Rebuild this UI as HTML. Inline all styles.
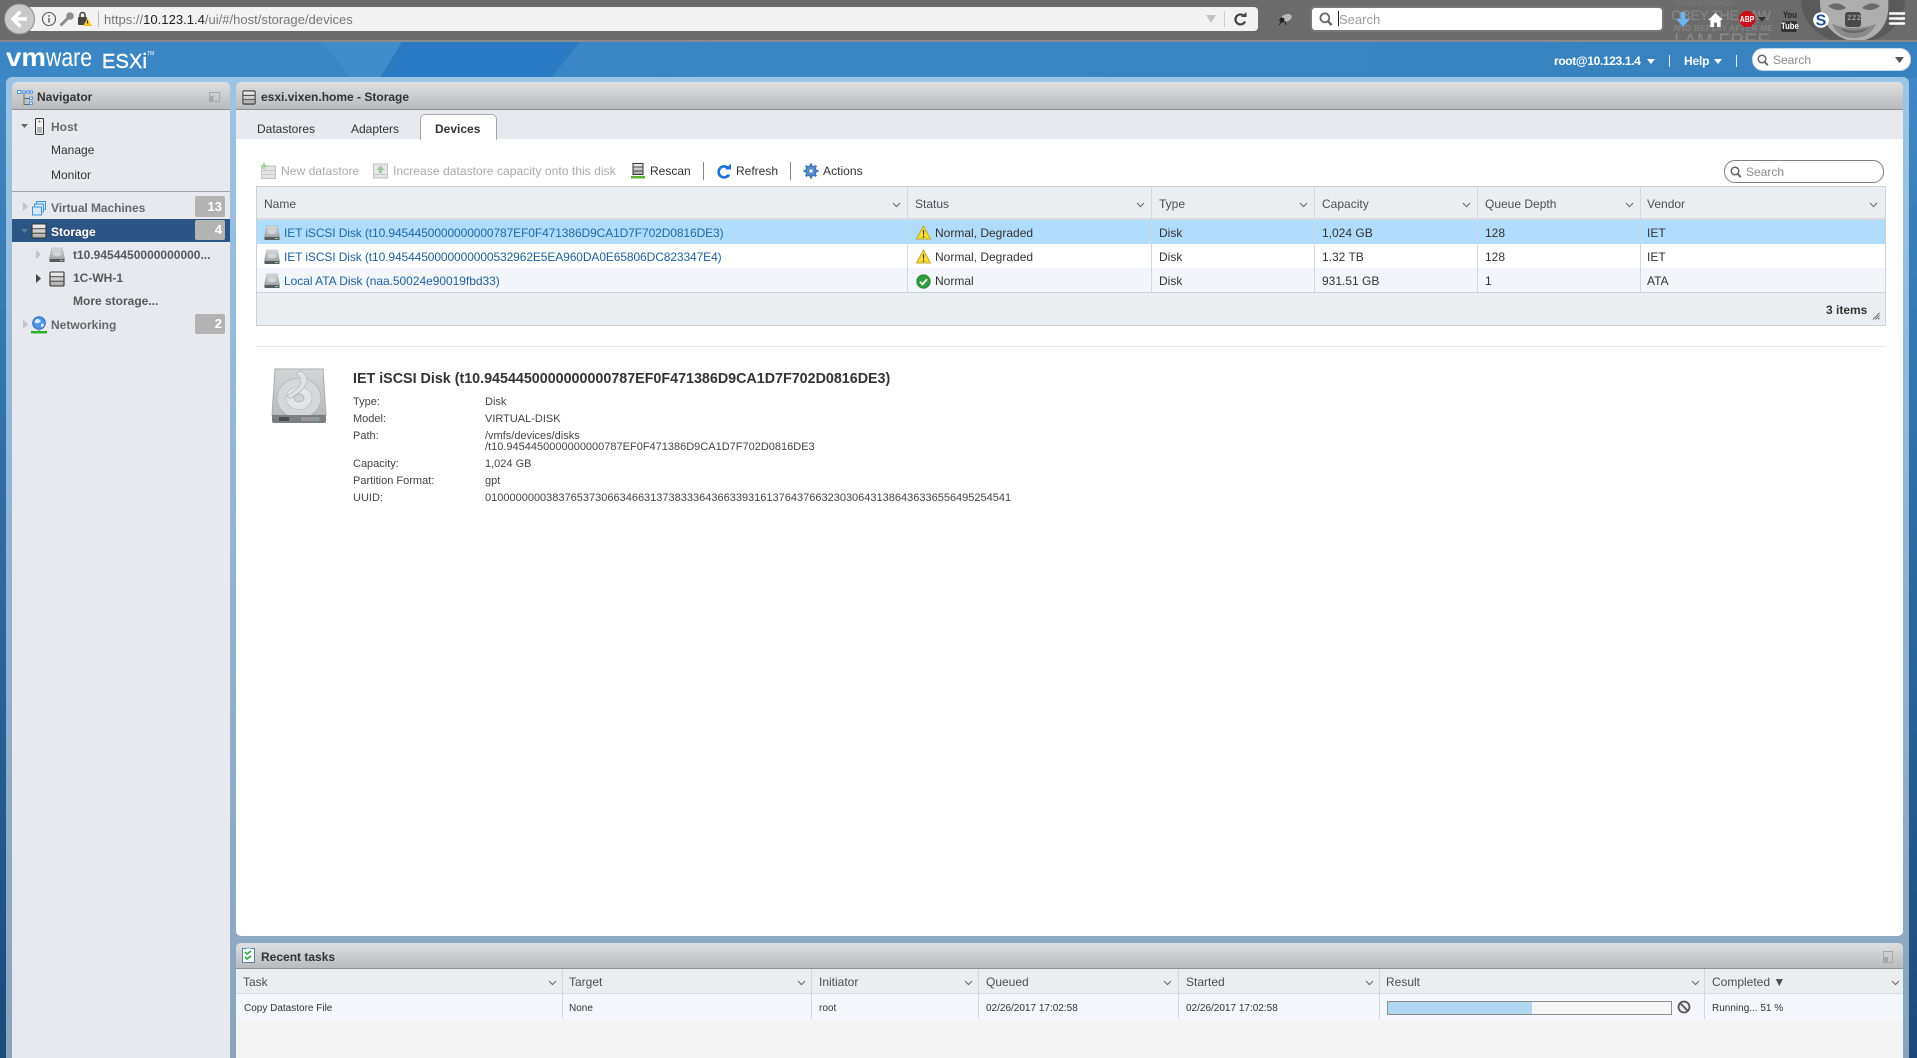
<!DOCTYPE html>
<html><head><meta charset="utf-8"><title>esxi.vixen.home - Storage</title>
<style>
html,body{margin:0;padding:0;width:1917px;height:1058px;overflow:hidden;background:#1c4a78}
#w{position:absolute;left:0;top:0;width:1917px;height:1058px;overflow:hidden;font-family:"Liberation Sans",sans-serif;font-size:12px;color:#333;filter:blur(.3px)}
.a{position:absolute}
.t{position:absolute;white-space:nowrap;line-height:16px;height:16px}
.b{font-weight:bold}
.g{color:#aaa;font-size:12.15px}
.h{color:#4b4f55}
.l{color:#1d5f9c}
.s{font-size:11px;color:#444}
.r{font-size:10px;color:#333}
.sep{position:absolute;width:1px;background:#d3d7db}
.ph{background:linear-gradient(#dfdfe0,#b8babd);border-bottom:1px solid #8d8f93;box-sizing:border-box}
.bd{position:absolute;left:195px;width:30px;background:#b3b3b3;border-radius:2px;color:#fff;font-weight:bold;font-size:13px;text-align:right;box-sizing:border-box;padding-right:3px}
svg{position:absolute;overflow:visible}
</style></head><body><div id="w">
<svg width="0" height="0" style="left:0;top:0"><defs>
<linearGradient id="gd" x1="0" y1="0" x2="0" y2="1"><stop offset="0" stop-color="#dfe2e4"/><stop offset="1" stop-color="#9ea3a6"/></linearGradient>
<linearGradient id="gs" x1="0" y1="0" x2="0" y2="1"><stop offset="0" stop-color="#f4f4f4"/><stop offset="1" stop-color="#a9a9a9"/></linearGradient>
<linearGradient id="gb" x1="0" y1="0" x2="0" y2="1"><stop offset="0" stop-color="#d4d5d7"/><stop offset="1" stop-color="#b9babc"/></linearGradient>
<symbol id="dk" viewBox="0 0 16 16"><path d="M3 1h10l2.500 10v1h-15v-1z" fill="url(#gd)" stroke="#9da2a6" stroke-width=".6"/><ellipse cx="8" cy="6.500" rx="4.800" ry="3" fill="#d4d7d9" stroke="#b3b6b9" stroke-width=".6"/><rect x=".5" y="12" width="15" height="3" fill="#565c60"/><rect x="11" y="13" width="3" height="1" fill="#9fd08f"/></symbol>
<symbol id="st" viewBox="0 0 16 16"><rect x="1" y="1" width="14" height="14" rx="1" fill="url(#gs)" stroke="#333" stroke-width="1.100"/><path d="M1 5.700h14M1 10.300h14" stroke="#444" stroke-width="1"/></symbol>
<symbol id="ch" viewBox="0 0 9 6"><path d="M1 1l3.500 3.600L8 1" fill="none" stroke="#666" stroke-width="1"/></symbol>
<symbol id="wn" viewBox="0 0 16 16"><path d="M8 1L15.500 15H.5z" fill="#f9dc2e" stroke="#b8a024" stroke-width=".9" stroke-linejoin="round"/><path d="M7.300 5.500h1.400l-.3 5.600h-.8zM7.200 12h1.600v1.600H7.200z" fill="#3a3a2a"/></symbol>
<symbol id="ok" viewBox="0 0 16 16"><circle cx="8" cy="8" r="7.200" fill="#2f9d3c" stroke="#237a2e" stroke-width=".8"/><path d="M4.300 8.300l2.600 2.700 4.800-5.400" fill="none" stroke="#fff" stroke-width="2"/></symbol>
<symbol id="sr" viewBox="0 0 12 12"><circle cx="5" cy="5" r="3.800" fill="none" stroke="#666" stroke-width="1.500"/><path d="M7.600 7.800l3.200 3.400" stroke="#666" stroke-width="2"/></symbol>
</defs></svg>

<!-- browser bar -->
<div class="a" style="left:0;top:0;width:1917px;height:41px;background:#6b6b6b"></div>
<div class="a" style="left:0;top:40px;width:1917px;height:2px;background:#8a8a8a"></div>
<svg style="left:1660px;top:0" width="257" height="41" viewBox="0 0 257 41">
<defs><clipPath id="cl"><rect width="257" height="40"/></clipPath></defs>
<g clip-path="url(#cl)" font-family="Liberation Sans,sans-serif" fill="#8a8a8a">
<text x="14" y="5" font-size="6" fill="#7c7c7c" textLength="60" lengthAdjust="spacingAndGlyphs">FOLLOW FASHION</text>
<text x="11" y="20" font-size="14" textLength="100" lengthAdjust="spacing">OBEY THE LAW</text>
<text x="13" y="31" font-size="8" textLength="100" lengthAdjust="spacing">AND REPLAY AFTER ME</text>
<text x="14" y="47" font-size="19" textLength="96" lengthAdjust="spacing">I AM FREE</text>
<ellipse cx="193" cy="0" rx="52" ry="44" fill="#5a5a5a"/>
<path d="M160-2h68c2 20-4 34-20 41-8 3-18 3-26-1-15-8-23-22-22-40z" fill="#aeaeae"/>
<path d="M168 6q10-6 18 2-9 5-18-2zM202 8q9-8 18-2-9 7-18 2z" fill="#6a6a6a"/>
<path d="M172 24q22 8 44 0-6 14-22 14t-22-14z" fill="#8a8a8a"/>
<path d="M180 28q14 5 28 0-4 5-14 5t-14-5z" fill="#666"/>
</g></svg>
<div class="a" style="left:30px;top:7px;width:1228px;height:24px;background:#f2f2f2;border-radius:0 4px 4px 0"></div>
<div class="a" style="left:1312px;top:8px;width:350px;height:22px;background:#fff;border-radius:3px;box-shadow:0 0 0 2px #777"></div>
<svg style="left:4px;top:4px" width="32" height="32" viewBox="0 0 32 32"><circle cx="15.500" cy="15" r="15" fill="#c9c9c9" stroke="#8e8e8e"/><path d="M16.500 7.500L9 15l7.500 7.500M9.500 15H23" fill="none" stroke="#fff" stroke-width="3.600"/></svg>
<svg style="left:42px;top:12px" width="14" height="14" viewBox="0 0 14 14"><circle cx="7" cy="7" r="6.500" fill="none" stroke="#555" stroke-width="1.100"/><path d="M7 6v4.500M7 3.200v1.600" stroke="#555" stroke-width="1.400"/></svg>
<svg style="left:59px;top:11px" width="16" height="16" viewBox="0 0 16 16"><circle cx="11" cy="5" r="3.800" fill="#8c8c8c"/><path d="M8.500 7.500L1.500 14.500" stroke="#8c8c8c" stroke-width="3"/></svg>
<svg style="left:77px;top:11px" width="16" height="16" viewBox="0 0 16 16"><rect x="1" y="6" width="9" height="8" rx="1" fill="#444"/><path d="M3 6V4a2.500 2.500 0 0 1 5 0v2" fill="none" stroke="#444" stroke-width="1.600"/><path d="M10.500 7l4.500 8H6z" fill="#f2c522"/><path d="M10.500 9.500v3" stroke="#333" stroke-width="1"/></svg>
<div class="a" style="left:98px;top:11px;width:1px;height:16px;background:#bbb"></div>
<div class="t" style="left:104px;top:12px;font-size:13.050px;color:#777">https://<span style="color:#222">10.123.1.4</span>/ui/#/host/storage/devices</div>
<svg style="left:1206px;top:15px" width="10" height="8" viewBox="0 0 10 8"><path d="M0 0h10L5 8z" fill="#c4c4c4"/></svg>
<div class="a" style="left:1224px;top:11px;width:1px;height:16px;background:#ccc"></div>
<svg style="left:1233px;top:12px" width="14" height="14" viewBox="0 0 14 14"><path d="M11.500 4.500A5 5 0 1 0 12 9.500" fill="none" stroke="#444" stroke-width="2.200"/><path d="M8 5h5.500V0z" fill="#444"/></svg>
<svg style="left:1276px;top:12px" width="18" height="14" viewBox="0 0 18 14"><ellipse cx="10" cy="6" rx="6" ry="3.600" fill="#b9b9b9" transform="rotate(-20 10 6)"/><circle cx="6" cy="8" r="2.600" fill="#222"/><path d="M6 9l-3 4M9 9l1 4" stroke="#222"/></svg>
<svg style="left:1319px;top:12px" width="14" height="14"><use href="#sr" width="14" height="14"/></svg>
<div class="a" style="left:1338px;top:11px;width:1px;height:15px;background:#222"></div>
<div class="t" style="left:1339px;top:12px;font-size:13px;color:#999">Search</div>
<svg style="left:1676px;top:12px" width="14" height="15" viewBox="0 0 15 17" preserveAspectRatio="none"><path d="M5 0h5v8h5l-7.500 9L0 8h5z" fill="#6eb3ee"/></svg>
<svg style="left:1708px;top:13px" width="15" height="14" viewBox="0 0 16 16" preserveAspectRatio="none"><path d="M8 0L0 8h2.500v8h4v-5h3v5h4V8H16z" fill="#fff"/></svg>
<svg style="left:1739px;top:11px" width="16" height="16" viewBox="0 0 16 16"><path d="M4.700 0h6.600L16 4.700v6.600L11.300 16H4.700L0 11.300V4.700z" fill="#c8101a"/><text x="8" y="11" font-size="8.500" font-weight="bold" fill="#fff" text-anchor="middle" font-family="Liberation Sans" textLength="14.500" lengthAdjust="spacingAndGlyphs">ABP</text></svg>
<svg style="left:1758px;top:17px" width="8" height="5" viewBox="0 0 8 5"><path d="M0 0h8L4 5z" fill="#333"/></svg>
<div class="a" style="left:1781px;top:21px;width:16px;height:11px;background:#333;border-radius:2px"></div>
<div class="t" style="left:1783px;top:10px;font-size:9px;font-weight:bold;color:#222;line-height:10px;height:10px;transform-origin:0 0;transform:scaleX(.85)">You</div>
<div class="t" style="left:1781px;top:21px;font-size:9px;font-weight:bold;color:#fff;line-height:11px;height:11px;transform-origin:0 0;transform:scaleX(.85)">Tube</div>
<svg style="left:1813px;top:12px" width="16" height="16" viewBox="0 0 16 16"><circle cx="8" cy="8" r="7.800" fill="#fff"/><text x="8" y="13.500" font-size="16" font-weight="bold" fill="#1b4f9c" text-anchor="middle" font-family="Liberation Sans">S</text></svg>
<div class="a" style="left:1845px;top:12px;width:16px;height:15px;background:#4a4a4a;border-radius:3px"></div>
<div class="t" style="left:1847px;top:11px;font-size:8px;color:#bbb;font-family:'Liberation Mono',monospace">zzz</div>
<svg style="left:1889px;top:12px" width="16" height="13" viewBox="0 0 16 13"><path d="M1 1.500h14M1 6.500h14M1 11.500h14" stroke="#fff" stroke-width="2.400" stroke-linecap="round"/></svg>

<!-- blue header -->
<div class="a" style="left:0;top:42px;width:1917px;height:36px;background:linear-gradient(90deg,#3b87c5 0,#3b87c5 30%,#3781bf 100%)"></div>
<svg style="left:0;top:42px" width="1917" height="36" viewBox="0 0 1917 36"><path d="M322 0h80l-22 36h-29z" fill="#408dc9"/><path d="M402 0h178l-29 36H380z" fill="#2a79c3"/></svg>
<svg style="left:0;top:42px" width="160" height="36" viewBox="0 0 160 36">
<text x="6" y="24" font-size="26" font-weight="bold" fill="#fff" font-family="Liberation Sans" textLength="40" lengthAdjust="spacingAndGlyphs">vm</text>
<text x="46" y="24" font-size="26" fill="#fff" font-family="Liberation Sans" textLength="46" lengthAdjust="spacingAndGlyphs">ware</text>
<text x="102" y="26" font-size="20" fill="#fff" stroke="#fff" stroke-width=".4" font-family="Liberation Sans" textLength="45" lengthAdjust="spacing">ESXi</text>
<text x="147" y="13" font-size="5" fill="#fff" font-family="Liberation Sans">TM</text>
</svg>
<div class="t b" style="left:1554px;top:53px;color:#fff;letter-spacing:-.35px">root@10.123.1.4</div>
<svg style="left:1647px;top:59px" width="8" height="5" viewBox="0 0 8 5"><path d="M0 0h8L4 5z" fill="#fff"/></svg>
<div class="a" style="left:1669px;top:55px;width:1px;height:12px;background:#dcecf7"></div>
<div class="t b" style="left:1684px;top:53px;color:#fff;letter-spacing:-.2px">Help</div>
<svg style="left:1714px;top:59px" width="8" height="5" viewBox="0 0 8 5"><path d="M0 0h8L4 5z" fill="#fff"/></svg>
<div class="a" style="left:1736px;top:55px;width:1px;height:12px;background:#dcecf7"></div>
<div class="a" style="left:1752px;top:48px;width:159px;height:23px;background:#fff;border-radius:11px;box-sizing:border-box;border:1px solid #c7d6e3"></div>
<svg style="left:1757px;top:54px" width="12" height="13"><use href="#sr" width="12" height="12"/></svg>
<div class="t" style="left:1773px;top:52px;color:#8b8b8b">Search</div>
<svg style="left:1895px;top:57px" width="9" height="6" viewBox="0 0 9 6"><path d="M0 0h9L4.500 6z" fill="#555"/></svg>

<!-- background strips -->
<div class="a" style="left:0;top:78px;width:1917px;height:980px;background:linear-gradient(#3d88c5,#1b4a7a)"></div>
<div class="a" style="left:6px;top:77px;width:1903px;height:981px;background:linear-gradient(#9cc4e5 0,#93b9da 30%,#8aa4bd 100%);border-radius:6px 6px 0 0"></div>

<!-- navigator -->
<div class="a" style="left:12px;top:82px;width:218px;height:976px;background:#e8e9ee;border-radius:5px 5px 0 0;overflow:hidden">
<div class="ph" style="height:28px"></div>
</div>
<svg style="left:17px;top:90px" width="17" height="16" viewBox="0 0 17 16"><g fill="#fff" stroke="#3b8de0" stroke-width=".9"><rect x=".5" y=".5" width="3.400" height="3"/><rect x="5.700" y="1" width="2.400" height="2.200"/><rect x="9.500" y="1" width="2.400" height="2.200"/><rect x="13" y="1" width="2.400" height="2.200"/><rect x="12.500" y="7" width="2.800" height="2.600"/><rect x="12.500" y="12" width="2.800" height="2.600"/></g><path d="M7 4v10.500h5.500M7 8.500h5.500" fill="none" stroke="#666" stroke-width=".9"/></svg>
<div class="t b" style="left:37px;top:89px">Navigator</div>
<svg style="left:209px;top:92px" width="11" height="10" viewBox="0 0 11 10"><rect x=".5" y=".5" width="10" height="9" fill="none" stroke="#a9a9ab"/><rect x=".5" y="4" width="4" height="5.500" fill="#a9a9ab"/></svg>

<svg style="left:21px;top:124px" width="7" height="4" viewBox="0 0 9 5" preserveAspectRatio="none"><path d="M0 0h9L4.500 5z" fill="#666"/></svg>
<svg style="left:35px;top:118px" width="9" height="17" viewBox="0 0 9 17"><rect x=".5" y=".5" width="8" height="16" rx="1" fill="#f1f1f1" stroke="#333"/><path d="M2 10h5M2 12h5M2 14h5" stroke="#555" stroke-width=".8"/><circle cx="4.500" cy="3.500" r=".9" fill="#555"/></svg>
<div class="t b" style="left:51px;top:119px;color:#6a6a6a">Host</div>
<div class="t" style="left:51px;top:142px">Manage</div>
<div class="t" style="left:51px;top:167px">Monitor</div>
<div class="a" style="left:12px;top:191px;width:218px;height:1px;background:#a2a4a8"></div>

<svg style="left:23px;top:202px" width="5" height="9" viewBox="0 0 5 9"><path d="M0 0l5 4.500L0 9z" fill="#c3c4c7"/></svg>
<svg style="left:32px;top:201px" width="15" height="15" viewBox="0 0 15 15"><g fill="#d6e9fa" stroke="#3f95df" stroke-width="1"><rect x="4.500" y=".5" width="9" height="8"/><rect x="2.500" y="3" width="9" height="8"/><rect x=".5" y="6" width="9" height="8"/></g></svg>
<div class="t b" style="left:51px;top:200px;color:#66686c;letter-spacing:-.06px">Virtual Machines</div>
<div class="bd" style="top:196px;height:21px;line-height:21px">13</div>
<div class="a" style="left:12px;top:219px;width:218px;height:23px;background:#2a5585"></div>
<svg style="left:21px;top:229px" width="7" height="4" viewBox="0 0 9 5" preserveAspectRatio="none"><path d="M0 0h9L4.500 5z" fill="#5d7a9b"/></svg>
<svg style="left:31px;top:223px" width="16" height="16"><use href="#st" width="16" height="16"/></svg>
<div class="t b" style="left:51px;top:224px;color:#fff;text-shadow:0 0 1px #555">Storage</div>
<div class="bd" style="top:220px;height:20px;line-height:20px">4</div>
<svg style="left:36px;top:250px" width="5" height="9" viewBox="0 0 5 9"><path d="M0 0l5 4.500L0 9z" fill="#c3c4c7"/></svg>
<svg style="left:49px;top:247px" width="16" height="16"><use href="#dk" width="16" height="16"/></svg>
<div class="t b" style="left:73px;top:247px;color:#56585c">t10.9454450000000000...</div>
<svg style="left:36px;top:274px" width="5" height="9" viewBox="0 0 5 9"><path d="M0 0l5 4.500L0 9z" fill="#444"/></svg>
<svg style="left:49px;top:271px" width="16" height="16"><use href="#st" width="16" height="16"/></svg>
<div class="t b" style="left:73px;top:270px;color:#56585c">1C-WH-1</div>
<div class="t b" style="left:73px;top:293px;color:#56585c">More storage...</div>
<svg style="left:23px;top:320px" width="5" height="9" viewBox="0 0 5 9"><path d="M0 0l5 4.500L0 9z" fill="#c3c4c7"/></svg>
<svg style="left:31px;top:316px" width="16" height="17" viewBox="0 0 16 17"><circle cx="8" cy="7" r="6.300" fill="#4f97e6" stroke="#2b69b8"/><path d="M4 4q3-2 5 0t-2 3-3-3zM10 8q3-1 3 1t-3 2z" fill="#d8ecff"/><path d="M8 13v2" stroke="#777"/><rect x="0" y="15" width="16" height="2.400" fill="#22b522"/></svg>
<div class="t b" style="left:51px;top:317px;color:#66686c">Networking</div>
<div class="bd" style="top:314px;height:20px;line-height:20px">2</div>

<!-- main panel -->
<div class="a" style="left:236px;top:82px;width:1667px;height:854px;background:#fff;border-radius:5px;overflow:hidden">
<div class="ph" style="height:28px"></div>
<div style="height:29px;background:#e8e9ee"></div>
</div>
<svg style="left:242px;top:90px" width="14" height="15" viewBox="0 0 16 16" preserveAspectRatio="none"><use href="#st" width="16" height="16"/></svg>
<div class="t b" style="left:261px;top:89px;color:#333">esxi.vixen.home - Storage</div>
<div class="t" style="left:257px;top:121px">Datastores</div>
<div class="t" style="left:351px;top:121px">Adapters</div>
<div class="a" style="left:420px;top:114px;width:77px;height:26px;background:#fff;border:1px solid #a4a6aa;border-bottom:0;border-radius:5px 5px 0 0;box-sizing:border-box"></div>
<div class="t b" style="left:435px;top:121px">Devices</div>

<!-- toolbar -->
<svg style="left:261px;top:163px" width="15" height="16" viewBox="0 0 15 16"><rect x=".5" y="3" width="14" height="12.500" fill="#e4e4e4" stroke="#c2c2c2"/><path d="M1 7.500h13M1 11.500h13" stroke="#c9c9c9"/><path d="M3 0v6M0 3h6" stroke="#9ed79a" stroke-width="2"/></svg>
<div class="t g" style="left:281px;top:163px">New datastore</div>
<svg style="left:373px;top:163px" width="15" height="16" viewBox="0 0 15 16"><rect x=".5" y="1" width="14" height="14" fill="#e6e6e6" stroke="#c2c2c2"/><path d="M7.500 2.500l4 4.500h-2.500v3h-3V7H3.500z" fill="#9dc99a"/><path d="M1 11.500h13" stroke="#c4c4c4"/></svg>
<div class="t g" style="left:393px;top:163px">Increase datastore capacity onto this disk</div>
<svg style="left:631px;top:163px" width="14" height="16" viewBox="0 0 14 16"><rect x="2" y=".5" width="10" height="11" fill="url(#gs)" stroke="#333"/><path d="M2 4h10M2 8h10" stroke="#444"/><rect x="0" y="13" width="14" height="2.500" fill="#59b52f"/></svg>
<div class="t" style="left:650px;top:163px">Rescan</div>
<div class="a" style="left:703px;top:162px;width:1px;height:18px;background:#888"></div>
<svg style="left:717px;top:163px" width="15" height="16" viewBox="0 0 15 16"><path d="M11.500 5.500A5.500 5.500 0 1 0 12 11.500" fill="none" stroke="#1a74d2" stroke-width="2.600"/><path d="M8 6.500h6V.5z" fill="#1a74d2"/></svg>
<div class="t" style="left:736px;top:163px">Refresh</div>
<div class="a" style="left:790px;top:162px;width:1px;height:18px;background:#888"></div>
<svg style="left:803px;top:163px" width="16" height="16" viewBox="0 0 16 16"><circle cx="8" cy="8" r="5.200" fill="#5a90cf" stroke="#2f62a5"/><circle cx="8" cy="8" r="2.200" fill="#e6f0fa" stroke="#2f62a5" stroke-width=".6"/><path d="M8 .5v2.500M8 13v2.500M.5 8H3M13 8h2.500M2.700 2.700l1.800 1.800M11.500 11.500l1.800 1.800M2.700 13.300l1.800-1.800M11.500 4.500l1.800-1.800" stroke="#3e76bd" stroke-width="2.200"/></svg>
<div class="t" style="left:823px;top:163px;font-size:12.100px">Actions</div>
<div class="a" style="left:1724px;top:160px;width:160px;height:23px;box-sizing:border-box;border:1px solid #7d7f82;border-radius:11px;background:#fff"></div>
<svg style="left:1730px;top:166px" width="12" height="13"><use href="#sr" width="12" height="12"/></svg>
<div class="t" style="left:1746px;top:164px;color:#8b8b8b">Search</div>

<!-- table -->
<div class="a" style="left:256px;top:186px;width:1630px;height:140px;box-sizing:border-box;border:1px solid #ccd0d4;background:#ebeef1"></div>
<div class="a" style="left:257px;top:218px;width:1628px;height:2px;background:#d6dade"></div>
<div class="a" style="left:257px;top:220px;width:1628px;height:24px;background:#b0dcfd"></div>
<div class="a" style="left:257px;top:244px;width:1628px;height:24px;background:#fff"></div>
<div class="a" style="left:257px;top:268px;width:1628px;height:24px;background:#f2f6fb"></div>
<div class="a" style="left:257px;top:292px;width:1628px;height:1px;background:#cfd3d7"></div>
<div class="sep" style="left:907px;top:187px;height:105px"></div>
<div class="sep" style="left:1151px;top:187px;height:105px"></div>
<div class="sep" style="left:1314px;top:187px;height:105px"></div>
<div class="sep" style="left:1477px;top:187px;height:105px"></div>
<div class="sep" style="left:1640px;top:187px;height:105px"></div>
<div class="t h" style="left:264px;top:196px">Name</div>
<div class="t h" style="left:915px;top:196px">Status</div>
<div class="t h" style="left:1159px;top:196px">Type</div>
<div class="t h" style="left:1322px;top:196px">Capacity</div>
<div class="t h" style="left:1485px;top:196px">Queue Depth</div>
<div class="t h" style="left:1647px;top:196px">Vendor</div>
<svg style="left:892px;top:202px" width="9" height="6"><use href="#ch" width="9" height="6"/></svg>
<svg style="left:1136px;top:202px" width="9" height="6"><use href="#ch" width="9" height="6"/></svg>
<svg style="left:1299px;top:202px" width="9" height="6"><use href="#ch" width="9" height="6"/></svg>
<svg style="left:1462px;top:202px" width="9" height="6"><use href="#ch" width="9" height="6"/></svg>
<svg style="left:1625px;top:202px" width="9" height="6"><use href="#ch" width="9" height="6"/></svg>
<svg style="left:1869px;top:202px" width="9" height="6"><use href="#ch" width="9" height="6"/></svg>

<svg style="left:264px;top:225px" width="16" height="16"><use href="#dk" width="16" height="16"/></svg>
<div class="t l" style="left:284px;top:225px;color:#1e6aa8;letter-spacing:-.105px">IET iSCSI Disk (t10.9454450000000000787EF0F471386D9CA1D7F702D0816DE3)</div>
<svg style="left:916px;top:225px" width="15" height="15"><use href="#wn" width="15" height="15"/></svg>
<div class="t" style="left:935px;top:225px">Normal, Degraded</div>
<div class="t" style="left:1159px;top:225px">Disk</div>
<div class="t" style="left:1322px;top:225px">1,024 GB</div>
<div class="t" style="left:1485px;top:225px">128</div>
<div class="t" style="left:1647px;top:225px">IET</div>

<svg style="left:264px;top:249px" width="16" height="16"><use href="#dk" width="16" height="16"/></svg>
<div class="t l" style="left:284px;top:249px;letter-spacing:-.105px">IET iSCSI Disk (t10.9454450000000000532962E5EA960DA0E65806DC823347E4)</div>
<svg style="left:916px;top:249px" width="15" height="15"><use href="#wn" width="15" height="15"/></svg>
<div class="t" style="left:935px;top:249px">Normal, Degraded</div>
<div class="t" style="left:1159px;top:249px">Disk</div>
<div class="t" style="left:1322px;top:249px">1.32 TB</div>
<div class="t" style="left:1485px;top:249px">128</div>
<div class="t" style="left:1647px;top:249px">IET</div>

<svg style="left:264px;top:273px" width="16" height="16"><use href="#dk" width="16" height="16"/></svg>
<div class="t l" style="left:284px;top:273px;letter-spacing:-.035px">Local ATA Disk (naa.50024e90019fbd33)</div>
<svg style="left:916px;top:274px" width="15" height="15"><use href="#ok" width="15" height="15"/></svg>
<div class="t" style="left:935px;top:273px">Normal</div>
<div class="t" style="left:1159px;top:273px">Disk</div>
<div class="t" style="left:1322px;top:273px">931.51 GB</div>
<div class="t" style="left:1485px;top:273px">1</div>
<div class="t" style="left:1647px;top:273px">ATA</div>

<div class="t b" style="left:1826px;top:302px">3 items</div>
<svg style="left:1872px;top:312px" width="8" height="8" viewBox="0 0 8 8"><path d="M7.500 1L1 7.500M7.500 3.500L3.500 7.500M7.500 6L6 7.500" stroke="#666" stroke-width=".9"/></svg>

<div class="a" style="left:256px;top:346px;width:1630px;height:1px;background:#e6e6e6"></div>

<!-- details -->
<svg style="left:271px;top:368px" width="56" height="57" viewBox="0 0 56 57">
<path d="M4 1h48l3 46H1z" fill="url(#gb)" stroke="#a9abad"/>
<ellipse cx="28" cy="30" rx="22" ry="20" fill="#d6d7d9" stroke="#b2b4b6" stroke-width=".8"/>
<ellipse cx="28" cy="30" rx="13" ry="11.500" fill="#e4e5e6" stroke="#bcbec0" stroke-width=".8"/>
<ellipse cx="28" cy="30" rx="5" ry="4" fill="#d2d3d5" stroke="#a9abad" stroke-width=".7"/>
<path d="M30 3q12 8 0 20l-11 8-3-3 11-8q6-8-2-15z" fill="#e0e1e2" stroke="#aeb0b2" stroke-width=".6"/>
<path d="M1 47h54v6q0 2-2 2H3q-2 0-2-2z" fill="#7c7f82"/>
<rect x="8" y="49" width="10" height="4" fill="#4a4c4e"/>
<rect x="30" y="49" width="18" height="4" fill="#96999b"/>
<rect x="47" y="50" width="2" height="1" fill="#7fd06a"/>
</svg>
<div class="t b" style="left:353px;top:371px;font-size:14.300px;color:#333">IET iSCSI Disk (t10.9454450000000000787EF0F471386D9CA1D7F702D0816DE3)</div>
<div class="t s" style="left:353px;top:394px">Type:</div><div class="t s" style="left:485px;top:394px">Disk</div>
<div class="t s" style="left:353px;top:411px">Model:</div><div class="t s" style="left:485px;top:411px">VIRTUAL-DISK</div>
<div class="t s" style="left:353px;top:428px">Path:</div><div class="t s" style="left:485px;top:428px">/vmfs/devices/disks</div>
<div class="t s" style="left:485px;top:439px">/t10.9454450000000000787EF0F471386D9CA1D7F702D0816DE3</div>
<div class="t s" style="left:353px;top:456px">Capacity:</div><div class="t s" style="left:485px;top:456px">1,024 GB</div>
<div class="t s" style="left:353px;top:473px">Partition Format:</div><div class="t s" style="left:485px;top:473px">gpt</div>
<div class="t s" style="left:353px;top:490px">UUID:</div><div class="t s" style="left:485px;top:490px">01000000003837653730663466313738333643663393161376437663230306431386436336556495254541</div>

<!-- tasks -->
<div class="a" style="left:236px;top:943px;width:1667px;height:115px;background:#f3f3f3;border-radius:5px 5px 0 0;overflow:hidden">
<div class="ph" style="height:26px"></div>
<div style="height:25px;background:#ebeef1;border-bottom:1px solid #d8dbdf;box-sizing:border-box"></div>
<div style="height:25px;background:#f3f7fc"></div>
</div>
<svg style="left:242px;top:946px" width="13" height="17" viewBox="0 0 13 17"><rect x=".5" y="2.500" width="12" height="14" fill="#f2f7fb" stroke="#5c7f9a"/><path d="M4 3l2.500-3L9 3z" fill="#a8d4f2"/><path d="M3 6l2 2 4-3M3 11l2 2 4-3" fill="none" stroke="#2aa52a" stroke-width="1.500"/></svg>
<div class="t b" style="left:261px;top:949px;color:#333">Recent tasks</div>
<svg style="left:1883px;top:951px" width="10" height="12" viewBox="0 0 10 12"><rect x=".5" y=".5" width="9" height="11" fill="none" stroke="#a5a7aa"/><rect x=".5" y="6" width="4.500" height="5.500" fill="#a5a7aa"/></svg>
<div class="t h" style="left:243px;top:974px">Task</div>
<div class="t h" style="left:569px;top:974px">Target</div>
<div class="t h" style="left:819px;top:974px">Initiator</div>
<div class="t h" style="left:986px;top:974px">Queued</div>
<div class="t h" style="left:1186px;top:974px">Started</div>
<div class="t h" style="left:1386px;top:974px">Result</div>
<div class="t h" style="left:1712px;top:974px">Completed ▼</div>
<svg style="left:548px;top:980px" width="9" height="6"><use href="#ch" width="9" height="6"/></svg>
<svg style="left:797px;top:980px" width="9" height="6"><use href="#ch" width="9" height="6"/></svg>
<svg style="left:964px;top:980px" width="9" height="6"><use href="#ch" width="9" height="6"/></svg>
<svg style="left:1163px;top:980px" width="9" height="6"><use href="#ch" width="9" height="6"/></svg>
<svg style="left:1365px;top:980px" width="9" height="6"><use href="#ch" width="9" height="6"/></svg>
<svg style="left:1691px;top:980px" width="9" height="6"><use href="#ch" width="9" height="6"/></svg>
<svg style="left:1891px;top:980px" width="9" height="6"><use href="#ch" width="9" height="6"/></svg>
<div class="sep" style="left:562px;top:969px;height:50px"></div>
<div class="sep" style="left:811px;top:969px;height:50px"></div>
<div class="sep" style="left:978px;top:969px;height:50px"></div>
<div class="sep" style="left:1178px;top:969px;height:50px"></div>
<div class="sep" style="left:1379px;top:969px;height:50px"></div>
<div class="sep" style="left:1704px;top:969px;height:50px"></div>
<div class="t r" style="left:244px;top:1001px">Copy Datastore File</div>
<div class="t r" style="left:569px;top:1001px">None</div>
<div class="t r" style="left:819px;top:1001px">root</div>
<div class="t r" style="left:986px;top:1001px">02/26/2017 17:02:58</div>
<div class="t r" style="left:1186px;top:1001px">02/26/2017 17:02:58</div>
<div class="a" style="left:1387px;top:1001px;width:285px;height:14px;box-sizing:border-box;border:1px solid #8d8f92;background:#f6f6f6"><div style="width:144px;height:12px;background:#b1d7f1"></div></div>
<svg style="left:1677px;top:1000px" width="14" height="14" viewBox="0 0 14 14"><circle cx="7" cy="7" r="5.500" fill="#eee" stroke="#555" stroke-width="1.800"/><path d="M3 3l8 8" stroke="#555" stroke-width="1.800"/></svg>
<div class="t r" style="left:1712px;top:1001px">Running... 51 %</div>
</div></body></html>
